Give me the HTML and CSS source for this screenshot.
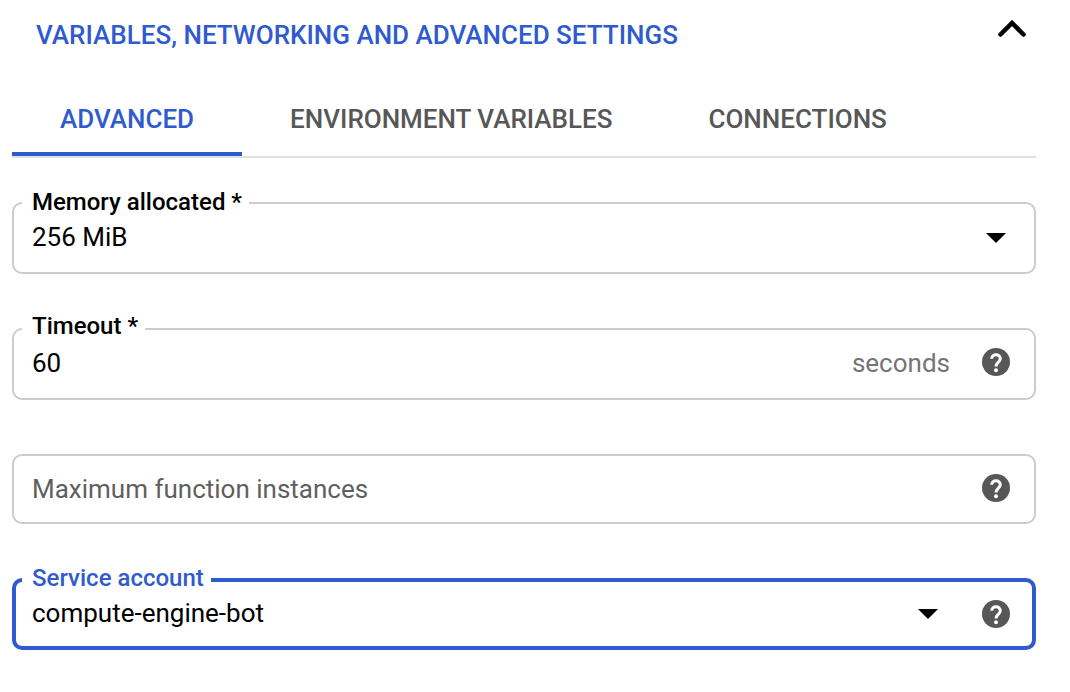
FILE: index.html
```html
<!DOCTYPE html>
<html lang="en">
<head>
<meta charset="utf-8">
<meta name="viewport" content="width=device-width, initial-scale=1">
<title>Advanced settings</title>
<link rel="stylesheet" href="styles.css">
</head>
<body>
<svg class="sprite" aria-hidden="true">
  <symbol id="help" viewBox="0 0 28 28"><circle cx="14" cy="14" r="14" fill="currentColor"/><path d="M9.700 10.800C9.700 8.200 11.600 6.700 14 6.700s4.300 1.600 4.300 4C18.300 14 14 14.300 14 18.600" fill="none" stroke="#fff" stroke-width="3"/><circle cx="14" cy="22.200" r="2" fill="#fff"/></symbol>
  <symbol id="caret" viewBox="0 0 20 10"><path d="M0 0h20L10 10z" fill="currentColor"/></symbol>
</svg>
<main class="settings">
  <button class="toggle" type="button" aria-expanded="true">
    <span>VARIABLES, NETWORKING AND ADVANCED SETTINGS</span>
    <svg class="chevron" viewBox="0 0 28 18" aria-hidden="true"><path d="M2.500 14.500 14 3l11.500 11.500" fill="none" stroke="currentColor" stroke-width="4.500" stroke-linecap="round"/></svg>
  </button>
  <div class="tabs" role="tablist">
    <button class="tab active" type="button" role="tab" aria-selected="true">ADVANCED</button>
    <button class="tab" type="button" role="tab" aria-selected="false">ENVIRONMENT VARIABLES</button>
    <button class="tab" type="button" role="tab" aria-selected="false">CONNECTIONS</button>
  </div>
  <form class="fields">
    <div class="field">
      <label class="label" for="memory">Memory allocated *</label>
      <select class="control" id="memory"><option>256 MiB</option></select>
      <svg class="caret" aria-hidden="true"><use href="#caret"/></svg>
    </div>
    <div class="field text-field">
      <label class="label" for="timeout">Timeout *</label>
      <input class="control" id="timeout" type="text" inputmode="numeric" value="60">
      <span class="suffix">seconds</span>
      <button class="help" type="button" aria-label="Help for timeout"><svg class="help-icon"><use href="#help"/></svg></button>
    </div>
    <div class="field text-field empty">
      <input class="control" id="instances" type="text" placeholder="Maximum function instances" aria-label="Maximum function instances">
      <button class="help" type="button" aria-label="Help for maximum function instances"><svg class="help-icon"><use href="#help"/></svg></button>
    </div>
    <div class="field focused">
      <label class="label" for="account">Service account</label>
      <select class="control" id="account"><option>compute-engine-bot</option></select>
      <svg class="caret" aria-hidden="true"><use href="#caret"/></svg>
      <button class="help" type="button" aria-label="Help for service account"><svg class="help-icon"><use href="#help"/></svg></button>
    </div>
  </form>
</main>
</body>
</html>
```
FILE: styles.css
```css
* { box-sizing: border-box; }

body {
  margin: 0;
  background: #fff;
  color: #000;
  font: 400 26px/32px Roboto, sans-serif;
}

button, input, select { font: inherit; }

button {
  border: 0;
  padding: 0;
  background: none;
  cursor: pointer;
}

.sprite { position: absolute; width: 0; height: 0; }

.settings { padding: 19px 34px 42px 12px; }

.toggle {
  display: flex;
  align-items: flex-start;
  justify-content: space-between;
  width: 100%;
  padding: 0 10px 0 24px;
  color: #2f5bcf;
  font-weight: 500;
  text-align: left;
}

.chevron {
  flex: none;
  width: 28px;
  height: 18px;
  margin-top: 1px;
  color: #000;
}

.tabs {
  display: flex;
  margin-top: 36px;
  border-bottom: 2px solid #e0e0e0;
}

.tab {
  padding: 16px 48px 17px;
  border-bottom: 4px solid transparent;
  color: #575757;
  font-weight: 500;
  white-space: nowrap;
}

.tab.active { border-color: #2f5bcf; color: #2f5bcf; }

.fields {
  display: flex;
  flex-direction: column;
  gap: 54px;
  margin-top: 44px;
}

.field {
  position: relative;
  display: flex;
  align-items: center;
  min-height: 72px;
  padding: 0 26px 0 20px;
  border-radius: 10px;
}

.field.empty { min-height: 70px; }

.field::before {
  content: "";
  position: absolute;
  inset: 0;
  border: 2px solid #ccc;
  border-radius: 10px;
  pointer-events: none;
}

.field.focused::before { border: 4px solid #2f5bcf; }

.label {
  position: absolute;
  top: -14px;
  left: 10px;
  padding: 0 7px 0 10px;
  background: #fff;
  font-size: 24px;
  font-weight: 500;
  line-height: 28px;
}

.text-field .label { top: -16px; }

.focused .label { color: #2f5bcf; }

.control {
  flex: 1;
  min-width: 0;
  height: 68px;
  padding: 0 0 2px;
  border: 0;
  outline: 0;
  background: transparent;
  color: #000;
  appearance: none;
}

.empty .control { padding-bottom: 0; }

.control::placeholder { color: #5f5f5f; opacity: 1; }

.suffix { padding-bottom: 2px; color: #757575; }

.caret {
  flex: none;
  width: 20px;
  height: 10px;
  margin-right: 4px;
  pointer-events: none;
}

.help {
  flex: none;
  display: flex;
  margin-left: 32px;
  color: #575757;
}

.text-field .help { padding-bottom: 4px; }

.text-field.empty .help { padding-bottom: 2px; }

.caret + .help { margin-left: 40px; }

.help-icon { width: 28px; height: 28px; }
```
